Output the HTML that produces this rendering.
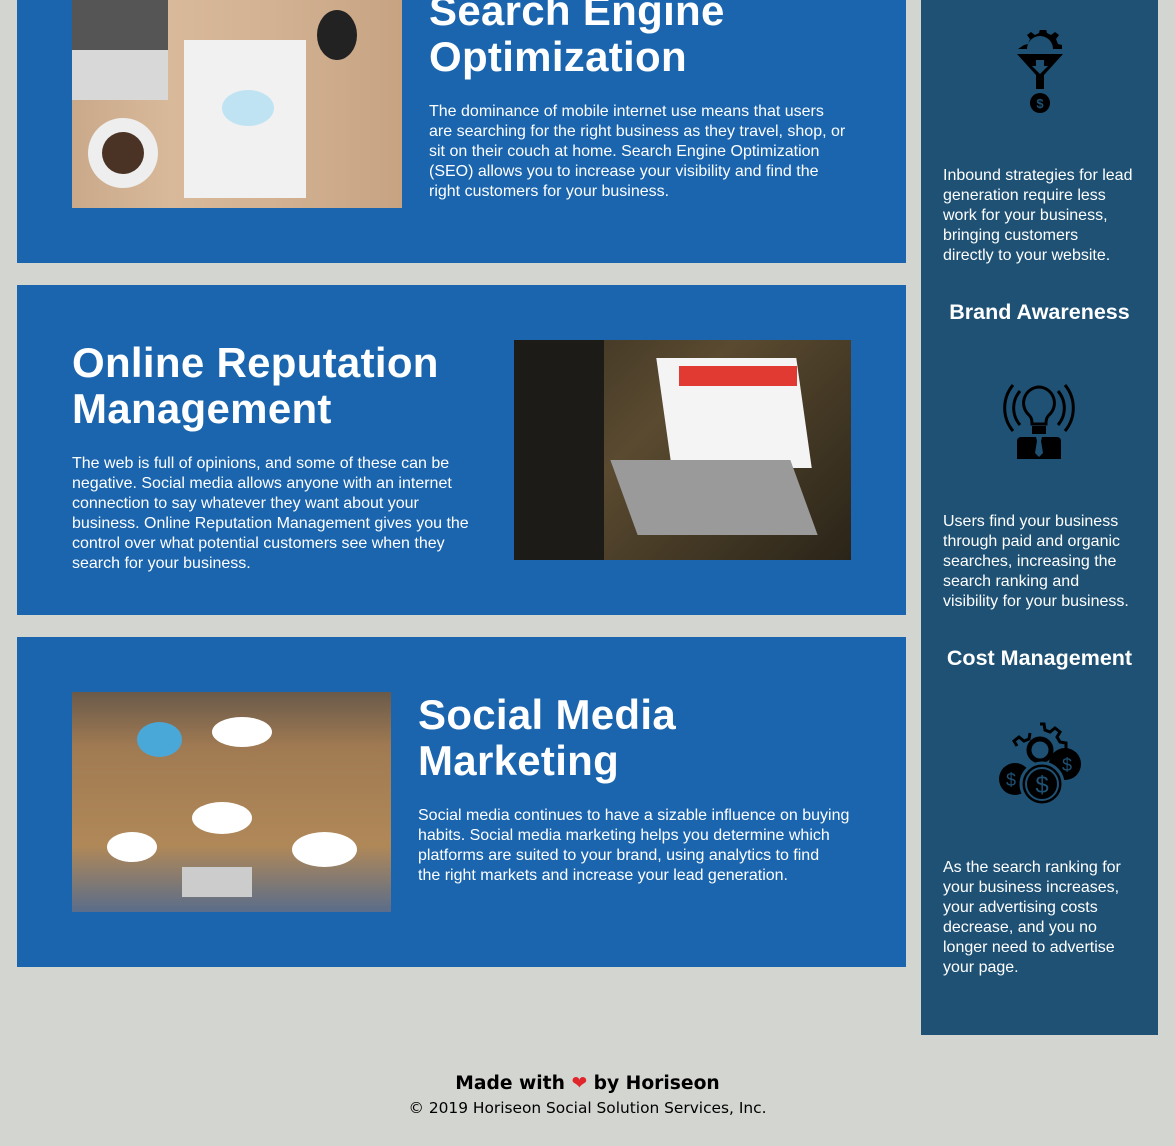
<!DOCTYPE html>
<html><head><meta charset="utf-8"><style>
*{margin:0;padding:0;box-sizing:border-box}
body{width:1175px;height:1146px;background:#d3d5d0;position:relative;overflow:hidden;font-family:"Liberation Sans",sans-serif;color:#fff}
.sec{position:absolute;left:17px;width:889px;background:#1a65ae}
.a{position:absolute}
h2{position:absolute;font-size:42px;line-height:46px;font-weight:bold;white-space:nowrap;letter-spacing:0.3px}
p.t{position:absolute;font-size:16px;line-height:20px;white-space:nowrap}
#side{position:absolute;left:921px;top:0;width:237px;height:1035px;background:#1e5174}
#side h3{position:absolute;width:237px;text-align:center;font-size:21.5px;font-weight:bold;left:0}
#side p{position:absolute;left:22px;font-size:16px;line-height:20px;white-space:nowrap}
#side svg{position:absolute}
</style></head><body>
<div class="sec" style="top:0;height:263px">
 <div class="a" style="left:55px;top:0;width:330px;height:208px;background:linear-gradient(90deg,#c9a98a 0%,#d8b999 30%,#d2b293 60%,#c7a382 100%)">
  <div class="a" style="left:0;top:0;width:96px;height:100px;background:linear-gradient(#555 0 50%,#d8d8d8 50%)"></div>
  <div class="a" style="left:16px;top:118px;width:70px;height:70px;border-radius:50%;background:#eee"></div>
  <div class="a" style="left:30px;top:132px;width:42px;height:42px;border-radius:50%;background:#4a3325"></div>
  <div class="a" style="left:112px;top:40px;width:122px;height:158px;background:#f1f1f1"></div>
  <div class="a" style="left:150px;top:90px;width:52px;height:36px;border-radius:50%;background:#bfe3f3"></div>
  <div class="a" style="left:245px;top:10px;width:40px;height:50px;border-radius:50%;background:#222"></div>
 </div>
 <h2 style="left:412px;top:-12px">Search Engine<br>Optimization</h2>
 <p class="t" style="left:412px;top:102px">The dominance of mobile internet use means that users<br>are searching for the right business as they travel, shop, or<br>sit on their couch at home. Search Engine Optimization<br>(SEO) allows you to increase your visibility and find the<br>right customers for your business.</p>
</div>
<div class="sec" style="top:285px;height:330px">
 <h2 style="left:55px;top:55px">Online Reputation<br>Management</h2>
 <p class="t" style="left:55px;top:169px">The web is full of opinions, and some of these can be<br>negative. Social media allows anyone with an internet<br>connection to say whatever they want about your<br>business. Online Reputation Management gives you the<br>control over what potential customers see when they<br>search for your business.</p>
 <div class="a" style="left:497px;top:55px;width:337px;height:220px;background:linear-gradient(135deg,#3a3222 0%,#5a4a30 40%,#2a2418 100%)">
  <div class="a" style="left:150px;top:18px;width:140px;height:110px;background:#f4f4f4;transform:skewX(8deg)"></div>
  <div class="a" style="left:165px;top:26px;width:118px;height:20px;background:#e03a32"></div>
  <div class="a" style="left:110px;top:120px;width:180px;height:75px;background:#9a9a9a;transform:skewX(20deg)"></div>
  <div class="a" style="left:0;top:0;width:90px;height:220px;background:#1d1b18"></div>
 </div>
</div>
<div class="sec" style="top:637px;height:330px">
 <div class="a" style="left:55px;top:55px;width:319px;height:220px;background:linear-gradient(180deg,#6a5a4a 0%,#a07a52 25%,#b08858 70%,#5a6d8a 100%)">
  <div class="a" style="left:65px;top:30px;width:45px;height:35px;border-radius:50%;background:#4aa8d8"></div>
  <div class="a" style="left:140px;top:25px;width:60px;height:30px;border-radius:50%;background:#fff"></div>
  <div class="a" style="left:120px;top:110px;width:60px;height:32px;border-radius:50%;background:#fff"></div>
  <div class="a" style="left:220px;top:140px;width:65px;height:35px;border-radius:50%;background:#fff"></div>
  <div class="a" style="left:35px;top:140px;width:50px;height:30px;border-radius:50%;background:#fff"></div>
  <div class="a" style="left:110px;top:175px;width:70px;height:30px;background:#ccc"></div>
 </div>
 <h2 style="left:401px;top:55px">Social Media<br>Marketing</h2>
 <p class="t" style="left:401px;top:169px">Social media continues to have a sizable influence on buying<br>habits. Social media marketing helps you determine which<br>platforms are suited to your brand, using analytics to find<br>the right markets and increase your lead generation.</p>
</div>
<div id="side">
 <svg style="left:94px;top:30px" width="50" height="84" viewBox="0 0 50 84">
  <path d="M3 19h9a13 13 0 0 1 26 0h9v-4l-4-1-2-5 3-4-4-3-4 3-4-2-1-4h-6l-1 4-4 2-4-3-4 3 3 4-2 5-4 1z" fill="#000"/>
  <path d="M2 24h46L29 45v14h-8V45z" fill="#000"/>
  <path d="M21 30h8v6h4l-8 8-8-8h4z" fill="#1e5174"/>
  <circle cx="25" cy="73" r="10" fill="#000"/>
  <text x="25" y="78" font-size="13" font-weight="bold" text-anchor="middle" fill="#1e5174" font-family="Liberation Sans">$</text>
 </svg>
 <p style="top:166px">Inbound strategies for lead<br>generation require less<br>work for your business,<br>bringing customers<br>directly to your website.</p>
 <h3 style="top:300px">Brand Awareness</h3>
 <svg style="left:78px;top:375px" width="80" height="86" viewBox="0 0 80 86">
  <g fill="none" stroke="#000" stroke-width="3">
   <path d="M14 10a36 36 0 0 0 0 46M21 16a26 26 0 0 0 0 34M66 10a36 36 0 0 1 0 46M59 16a26 26 0 0 1 0 34"/>
   <path d="M40 12a16 16 0 0 1 10 28c-3 3-3 6-3 9H33c0-3 0-6-3-9a16 16 0 0 1 10-28z"/>
  </g>
  <rect x="33" y="51" width="14" height="8" fill="#000"/>
  <path d="M22 62h36a4 4 0 0 1 4 4v18H18V66a4 4 0 0 1 4-4z" fill="#000"/>
  <path d="M37 62h6l-1 4 2 12-4 4-4-4 2-12z" fill="#1e5174"/>
 </svg>
 <p style="top:512px">Users find your business<br>through paid and organic<br>searches, increasing the<br>search ranking and<br>visibility for your business.</p>
 <h3 style="top:646px">Cost Management</h3>
 <svg style="left:76px;top:722px" width="86" height="86" viewBox="0 0 86 86">
  <path d="M43 2l4 0 1 6 5 2 5-4 5 4-3 5 3 5 6 1v6" fill="none" stroke="#000" stroke-width="3"/>
  <path d="M20 24l-3-5 5-4 5 4 5-2 1-6" fill="none" stroke="#000" stroke-width="3"/>
  <circle cx="43" cy="28" r="11" fill="none" stroke="#000" stroke-width="5"/>
  <circle cx="18" cy="57" r="16" fill="#000"/>
  <circle cx="68" cy="42" r="16" fill="#000"/>
  <circle cx="45" cy="62" r="21" fill="#000" stroke="#1e5174" stroke-width="3"/>
  <circle cx="45" cy="62" r="16" fill="none" stroke="#1e5174" stroke-width="2"/>
  <text x="45" y="71" font-size="24" text-anchor="middle" fill="#1e5174" font-family="Liberation Sans">$</text>
  <text x="14" y="64" font-size="18" text-anchor="middle" fill="#1e5174" font-family="Liberation Sans">$</text>
  <text x="70" y="49" font-size="18" text-anchor="middle" fill="#1e5174" font-family="Liberation Sans">$</text>
 </svg>
 <p style="top:858px">As the search ranking for<br>your business increases,<br>your advertising costs<br>decrease, and you no<br>longer need to advertise<br>your page.</p>
</div>
<div class="a" style="left:0;top:1070px;width:1175px;text-align:center;color:#000;font-family:'DejaVu Sans',sans-serif">
 <div style="font-size:18.7px;font-weight:bold;line-height:27px">Made with <span style="color:#e0262b">❤</span> by Horiseon</div>
 <div style="font-size:15.4px;line-height:22px">© 2019 Horiseon Social Solution Services, Inc.</div>
</div>
</body></html>
